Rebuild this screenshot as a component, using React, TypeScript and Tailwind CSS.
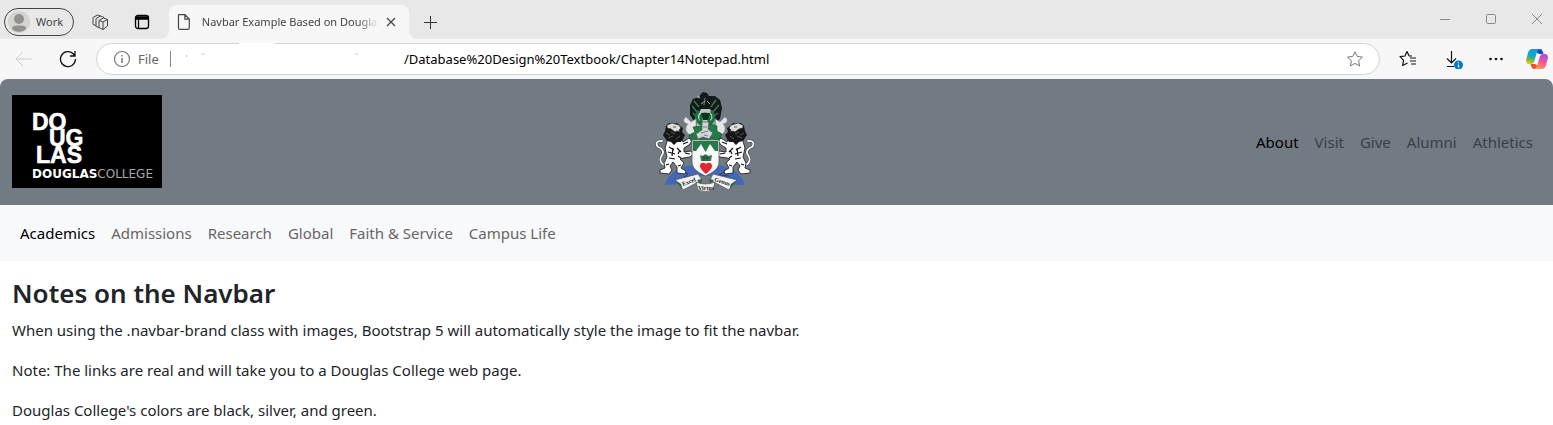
import type { ReactNode } from "react";

const topLinks = ["About", "Visit", "Give", "Alumni", "Athletics"];
const mainLinks = [
    "Academics",
    "Admissions",
    "Research",
    "Global",
    "Faith & Service",
    "Campus Life",
];

function IconButton({
    label,
    className = "",
    children,
}: {
    label: string;
    className?: string;
    children: ReactNode;
}) {
    return (
        <button
            aria-label={label}
            className={`flex h-8 w-8 shrink-0 items-center justify-center ${className}`}
        >
            {children}
        </button>
    );
}

function DouglasLogo() {
    return (
        <svg width="150" height="93" viewBox="0 0 150 93" role="img" aria-label="Douglas College">
            <rect width="150" height="93" fill="#000" />
            <g
                fill="#fff"
                fontFamily="Liberation Sans, sans-serif"
                fontWeight="700"
                fontSize="23"
                stroke="#fff"
                strokeWidth="0.6"
            >
                <text x="20" y="35">DO</text>
                <text x="37" y="51">UG</text>
                <text x="24" y="68">LAS</text>
            </g>
            <text x="20" y="83" fontFamily="DejaVu Sans, sans-serif" fontSize="12" fill="#fff">
                <tspan fontWeight="700">DOUGLAS</tspan>
                <tspan fill="#a8a8a8">COLLEGE</tspan>
            </text>
        </svg>
    );
}

function Lion() {
    return (
        <g>
            {/* tail */}
            <path
                d="M11 73C5 72 4 67 7 63C10 59 6 56 3 55C0 52 2 48 7 49"
                fill="none"
                stroke="#333"
                strokeWidth="2.8"
                strokeLinecap="round"
            />
            <path
                d="M11 73C5 72 4 67 7 63C10 59 6 56 3 55C0 52 2 48 7 49"
                fill="none"
                stroke="#fff"
                strokeWidth="1.8"
                strokeLinecap="round"
            />
            {/* body and limbs */}
            <path
                d="M13 46L26 44L28 50L34 46L37 49L34 53L29 56L29 60L36 59L38 62L35 65L28 66L25 67L29 71L26 76L31 79L30 82L22 81L22 75L18 70L15 74L17 78L14 82L5 81L5 78L10 76L9 71L12 65L10 56Z"
                fill="#fff"
                stroke="#222"
                strokeWidth="0.9"
            />
            <path
                d="M14 55L19 58M13 60L20 62M22 56L26 60M14 66L20 67M23 64L26 66M28 52L33 50M30 61L35 62M11 73L14 72M23 74L26 73M18 56L17 64M25 58L23 62"
                stroke="#111"
                strokeWidth="1.2"
                fill="none"
            />
            {/* mane */}
            <path
                d="M11 34L14 31L18 32L22 31L25 34L28 36L27 40L30 43L28 47L26 50L22 50L19 53L16 50L12 49L10 46L8 43L10 39Z"
                fill="#161616"
            />
            <path
                d="M12 33L17 31L24 33L26 36L24 38L25 40L22 39L20 40L16 37L12 36Z"
                fill="#ddd"
                stroke="#222"
                strokeWidth="0.7"
            />
            <path
                d="M18 35H21M11 41L15 43M13 46L18 44M21 47L25 44M16 40L20 42"
                stroke="#555"
                strokeWidth="1"
            />
        </g>
    );
}

function CoatOfArms() {
    return (
        <svg width="100" height="100" viewBox="0 0 100 100" role="img" aria-label="Coat of arms">
            {/* waves */}
            <path d="M10 93C14 78 30 72 50 72S86 78 90 93L76 93L66 84H34L25 92Z" fill="#4468b8" />
            <path
                d="M28 79L33 82L29 85L38 84M69 80L64 83L74 84"
                fill="none"
                stroke="#333d58"
                strokeWidth="1"
            />
            <Lion />
            <g transform="translate(100 0) scale(-1 1)">
                <Lion />
            </g>
            {/* eagle */}
            <path
                d="M45 3L48 0L52 1L54 4L60 4L65 8L67 16L65 27L61 30L57 24L50 28L43 24L39 29L35 23L35 13L38 7L44 5Z"
                fill="#131a17"
            />
            <path
                d="M39 9L44 15M37 14L42 20M61 8L56 15M64 13L58 20M38 21L41 24M63 21L59 24M50 6L49 13"
                stroke="#3b7556"
                strokeWidth="1.5"
            />
            <path d="M45 4L42 5L45 6M50 9L46 12M52 9L55 12" stroke="#9aa59f" fill="none" />
            <path d="M42 24L46 17H55L60 24L59 35H42Z" fill="#bdc5c1" />
            <path
                d="M44 19C39 24 42 30 46 32V27C45 25 46 22 50 22S56 24 54 27V32C59 30 61 24 56 19"
                fill="none"
                stroke="#197440"
                strokeWidth="3"
            />
            <path d="M46 21H55L53 28H48Z" fill="#0b3320" />
            {/* plumes */}
            <path
                d="M31 25C27 28 29 31 33 32C29 36 31 42 37 44L45 35L41 35L41 27L36 30Z"
                fill="#e4e6e7"
                stroke="#999"
                strokeWidth="0.7"
            />
            <path
                d="M70 25C74 28 72 31 68 32C72 36 70 42 64 44L56 35L61 35L60 27L65 30Z"
                fill="#e4e6e7"
                stroke="#999"
                strokeWidth="0.7"
            />
            {/* mantling and helmet */}
            <path
                d="M38 35L46 34L50 38L56 32L62 34L62 39L67 42L64 49L57 46L50 49L42 46L36 49L34 43L40 40Z"
                fill="#1f7d45"
                stroke="#1b4a30"
                strokeWidth="0.6"
            />
            <path
                d="M47 30H54L53 37L58 41L54 47L48 45L43 47L41 42L47 38Z"
                fill="#d2d6d9"
                stroke="#555"
                strokeWidth="0.7"
            />
            <path d="M46 41L53 39M48 35H52M49 43L53 44" stroke="#666" strokeWidth="0.8" />
            {/* shield */}
            <path
                d="M37 48H64V70C64 77 57 81 50.5 84C44 81 37 77 37 70Z"
                fill="#f7f8f8"
                stroke="#555"
                strokeWidth="0.8"
            />
            <path d="M38 49H63V59H60L55 52L50.500 60L46 52L41 59H38Z" fill="#267a48" />
            <path d="M45 63L48 64L50.500 62L53 64L57 63L56 69H46Z" fill="#3e7454" />
            <path d="M47 66H55M49 63V69M52 63V69" stroke="#183b29" strokeWidth="0.7" />
            <path d="M45 74C45 70 49 70 51 72C53 70 57 70 57 74C57 77 54 79 51 82C48 79 45 77 45 74Z" fill="#e5252c" />
            {/* motto ribbon */}
            <path
                d="M20 88L43 82L47 88L28 98Z M58 82L82 88L74 98L55 88Z M41 90Q50 94 60 90L58 98Q50 101 43 98Z"
                fill="#f3f3f3"
                stroke="#555"
                strokeWidth="0.7"
            />
            <path d="M19 87L26 92L28 98Z M83 87L76 92L74 98Z M42 88L47 87L46 92Z M59 88L54 87L55 92Z" fill="#26663f" />
            <g fill="#171717" fontFamily="Liberation Serif, serif" fontWeight="700" fontSize="6">
                <text x="28" y="94" transform="rotate(-20 28 94)">Excel</text>
                <text x="43" y="98">Virtus</text>
                <text x="59" y="89" transform="rotate(18 59 89)">Genus</text>
            </g>
        </svg>
    );
}

function TabStrip() {
    return (
        <div className="flex h-[39px] items-end bg-[#e8e8e8] text-[11px] text-[#444]">
            <button className="mb-[3px] ml-1 flex h-7 w-[70px] shrink-0 items-center gap-1.5 rounded-full border border-[#444] pl-[3px]">
                <svg width="22" height="22" viewBox="0 0 22 22">
                    <circle cx="11" cy="11" r="11" fill="#d5d2cf" />
                    <circle cx="11" cy="8" r="5" fill="#92908e" />
                    <path d="M4 18C4 15 6 14.500 11 14.500S18 15 18 18Q15 21 11 21T4 18Z" fill="#92908e" />
                </svg>
                Work
            </button>
            <IconButton label="Workspaces" className="mb-px ml-2.5">
                <svg width="18" height="18" viewBox="0 0 18 18" fill="none" stroke="#444" strokeLinejoin="round">
                    <path d="M8 7.500L12.500 5L16.500 6.500V13L12 16.500L8 14.500Z M8 7.500L12 9L16.500 6.500M12 9V16.500" />
                    <path d="M8 14.500L5 13.500V5.500L9.500 3L13 4.500M5 12.500L2 11.500V4.500L6.500 2L9.500 3" />
                </svg>
            </IconButton>
            <IconButton label="Tab actions" className="mb-px ml-2.5">
                <svg width="16" height="16" viewBox="0 0 16 16" fill="none" stroke="#000" strokeWidth="1.3">
                    <rect x="1.500" y="1.500" width="13" height="13" rx="2.500" />
                    <path d="M1.500 4H14.500" strokeWidth="3.500" />
                    <path d="M4.500 5V14" />
                </svg>
            </IconButton>
            <div className="relative ml-[11px] flex h-[34px] w-60 shrink-0 items-center rounded-t-lg bg-[#f7f7f7] pl-2 pr-2">
                <svg className="absolute -left-2 bottom-0" width="8" height="8" viewBox="0 0 8 8">
                    <path d="M8 0A8 8 0 0 1 0 8H8Z" fill="#f7f7f7" />
                </svg>
                <svg className="absolute -right-2 bottom-0" width="8" height="8" viewBox="0 0 8 8">
                    <path d="M0 0A8 8 0 0 0 8 8H0Z" fill="#f7f7f7" />
                </svg>
                <svg width="14" height="18" viewBox="0 0 14 18" fill="none" stroke="#444" strokeWidth="1.2">
                    <path d="M2 1.500H8L12.500 6V14.500Q12.500 16.500 11 16.500H3Q1.500 16.500 1.500 15V2.500Q1.500 1.500 2 1.500ZM8 1.500V6H12.500" />
                </svg>
                <span className="ml-[11px] w-[180px] overflow-hidden whitespace-nowrap [mask-image:linear-gradient(to_right,#000_88%,transparent)]">
                    Navbar Example Based on Douglas College
                </span>
                <button aria-label="Close tab" className="ml-0.5 flex h-5 w-5 shrink-0 items-center justify-center">
                    <svg width="10" height="10" viewBox="0 0 10 10" stroke="#444" strokeWidth="1.2">
                        <path d="M1 1L9 9M9 1L1 9" />
                    </svg>
                </button>
            </div>
            <IconButton label="New tab" className="mb-px ml-[5px]">
                <svg width="15" height="15" viewBox="0 0 15 15" stroke="#333">
                    <path d="M7.500 1V14M1 7.500H14" />
                </svg>
            </IconButton>
            <div className="mb-1 ml-auto flex gap-3.5">
                <IconButton label="Minimize">
                    <svg width="10" height="10" viewBox="0 0 10 10" stroke="#888">
                        <path d="M0 5.500H10" />
                    </svg>
                </IconButton>
                <IconButton label="Maximize">
                    <svg width="10" height="10" viewBox="0 0 10 10" stroke="#888" fill="none">
                        <rect x="0.500" y="0.500" width="9" height="9" rx="1" />
                    </svg>
                </IconButton>
                <IconButton label="Close">
                    <svg width="10" height="10" viewBox="0 0 10 10" stroke="#888">
                        <path d="M0 0L10 10M10 0L0 10" />
                    </svg>
                </IconButton>
            </div>
        </div>
    );
}

function Toolbar() {
    return (
        <div className="flex h-10 items-center bg-[#f7f7f7]">
            <IconButton label="Back" className="ml-2">
                <svg width="18" height="16" viewBox="0 0 18 16" fill="none" stroke="#ccc">
                    <path d="M17 8H1M8 1L1 8L8 15" />
                </svg>
            </IconButton>
            <IconButton label="Refresh" className="ml-3">
                <svg width="18" height="18" viewBox="0 0 18 18" fill="none" stroke="#111" strokeWidth="1.3">
                    <path d="M16.500 9A7.500 7.500 0 1 1 14 3.500L15.500 5.500M16 1V6H11" />
                </svg>
            </IconButton>
            <div className="relative ml-3 flex h-8 min-w-0 flex-1 items-center rounded-full border border-[#d4d5d6] bg-white px-4">
                <span className="absolute -top-px left-[142px] h-px w-9 bg-white" />
                <svg width="18" height="18" viewBox="0 0 18 18" fill="none" stroke="#777" strokeWidth="1.2">
                    <circle cx="9" cy="9" r="7.500" />
                    <path d="M9 8V13M9 5V6.500" strokeWidth="1.500" />
                </svg>
                <label htmlFor="address" className="ml-[7px] w-6 text-[13px] text-[#666]">
                    File
                </label>
                <span className="ml-2 h-4 w-px bg-[#888]" />
                <svg className="ml-[13px] shrink-0" width="220" height="16" viewBox="0 0 220 16">
                    <path d="M2 5H3" stroke="#4aa8e8" />
                    <path d="M17 3H21M171 3H174" stroke="#c4cad4" />
                </svg>
                <input
                    id="address"
                    defaultValue="/Database%20Design%20Textbook/Chapter14Notepad.html"
                    className="min-w-0 flex-1 bg-transparent text-[13px] text-black outline-none"
                />
                <button aria-label="Add to favorites" className="shrink-0">
                    <svg width="16" height="16" viewBox="0 0 16 16" fill="none" stroke="#777" strokeLinejoin="round">
                        <path d="M8 0.800L10.200 5.400L15.400 6.100L11.600 9.700L12.600 14.900L8 12.400L3.400 14.900L4.400 9.700L0.600 6.100L5.800 5.400Z" />
                    </svg>
                </button>
            </div>
            <IconButton label="Favorites" className="ml-3">
                <svg width="18" height="18" viewBox="0 0 18 18" fill="none" stroke="#111" strokeWidth="1.2" strokeLinejoin="round">
                    <path d="M13 6L10 5.800L8 1.500L6 6L1 6.600L4.600 10.300L3.600 15.500L8.500 13M11 8H17M11 11H17M12 14H17" />
                </svg>
            </IconButton>
            <IconButton label="Downloads" className="ml-3.5">
                <svg width="18" height="20" viewBox="0 0 18 20" fill="none" stroke="#111" strokeWidth="1.2">
                    <path d="M6.500 2V14M2 9.500L6.500 14L11 9.500M2 17.500H9" />
                    <circle cx="13.500" cy="16" r="4.500" fill="#0078d4" stroke="none" />
                    <path d="M13.500 15.500V18.500M13.500 13.300V14.300" stroke="#fff" />
                </svg>
            </IconButton>
            <IconButton label="Settings and more" className="ml-2.5">
                <svg width="14" height="4" viewBox="0 0 14 4" fill="#111">
                    <circle cx="1.500" cy="2" r="1.300" />
                    <circle cx="7" cy="2" r="1.300" />
                    <circle cx="12.500" cy="2" r="1.300" />
                </svg>
            </IconButton>
            <IconButton label="Copilot" className="ml-[9px]">
                <svg width="22" height="20" viewBox="0 0 22 20">
                    <defs>
                        <linearGradient id="cool" x1="0.600" y1="0" x2="0.300" y2="1">
                            <stop offset="0" stopColor="#129bf0" />
                            <stop offset="0.500" stopColor="#12a9bf" />
                            <stop offset="0.750" stopColor="#79b83b" />
                            <stop offset="1" stopColor="#f3c410" />
                        </linearGradient>
                        <linearGradient id="warm" x1="0.700" y1="0" x2="0.300" y2="1">
                            <stop offset="0" stopColor="#a54ee8" />
                            <stop offset="0.500" stopColor="#ef5798" />
                            <stop offset="1" stopColor="#ffa047" />
                        </linearGradient>
                    </defs>
                    <path d="M11 0H14Q16 0 16.500 2L17.500 5H13L10 3Z" fill="#1549bd" />
                    <path d="M11 20H8Q6 20 5.500 18L4.500 15H9L12 17Z" fill="#ed512c" />
                    <path d="M6 0H14Q12 0 11 3L8 13Q7 15 5 15H3Q0 15 0 11L2 4Q3 0 6 0Z" fill="url(#cool)" />
                    <path d="M16 20H8Q10 20 11 17L14 7Q15 5 17 5H19Q22 5 22 9L20 16Q19 20 16 20Z" fill="url(#warm)" />
                </svg>
            </IconButton>
        </div>
    );
}

export default function App() {
    return (
        <div className="min-h-screen overflow-hidden bg-white font-['Noto_Sans',sans-serif] text-[15px] leading-6 text-[#212529]">
            <header>
                <TabStrip />
                <Toolbar />
            </header>
            <div className="bg-[#f7f7f7]">
                <nav className="flex h-[126px] items-center justify-between rounded-t-lg bg-[#727a83] px-3">
                    <a href="#home" className="mr-4 pb-px">
                        <DouglasLogo />
                    </a>
                    <a href="#crest" className="mr-4">
                        <CoatOfArms />
                    </a>
                    <ul className="flex">
                        {topLinks.map((link, i) => (
                            <li key={link}>
                                <a
                                    href="#top"
                                    className={`block p-2 ${i === 0 ? "text-black" : "text-[#3b3f44]"}`}
                                >
                                    {link}
                                </a>
                            </li>
                        ))}
                    </ul>
                </nav>
            </div>
            <nav className="flex h-14 items-center bg-[#f8f9fa] px-3">
                <ul className="flex">
                    {mainLinks.map((link, i) => (
                        <li key={link}>
                            <a
                                href="#main"
                                className={`block p-2 ${i === 0 ? "text-black" : "text-[#666]"}`}
                            >
                                {link}
                            </a>
                        </li>
                    ))}
                </ul>
            </nav>
            <main className="px-3 pt-4">
                <h2 className="mb-2 text-[26px] leading-[33px] font-semibold">Notes on the Navbar</h2>
                <p className="mb-4">
                    When using the .navbar-brand class with images, Bootstrap 5 will automatically
                    style the image to fit the navbar.
                </p>
                <p className="mb-4">
                    Note: The links are real and will take you to a Douglas College web page.
                </p>
                <p>Douglas College's colors are black, silver, and green.</p>
            </main>
        </div>
    );
}
